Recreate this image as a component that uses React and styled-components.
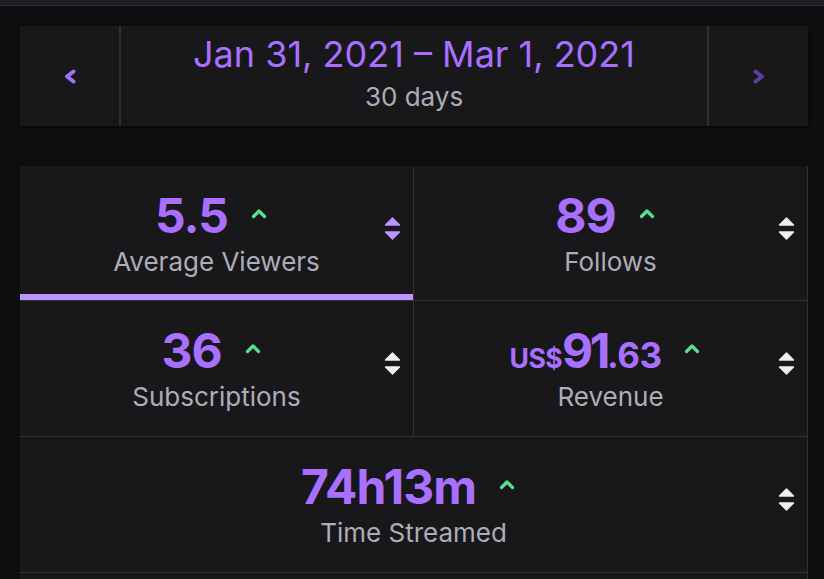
import React from "react";
import styled, { createGlobalStyle } from "styled-components";

const Global = createGlobalStyle`
  html, body { margin: 0; padding: 0; background: #0e0e10; }
  body { font-family: Inter, "Noto Sans", sans-serif; -webkit-font-smoothing: antialiased; }
`;

const TopBar = styled.div`
  height: 5px;
  background: #1f1f23;
  border-bottom: 1px solid #2a2a2f;
`;

const Main = styled.main`
  display: flex;
  flex-direction: column;
  gap: 40px;
  padding: 20px 16px 0 20px;
`;

const DateCard = styled.div`
  display: grid;
  grid-template-columns: 101px 1fr 101px;
  height: 100px;
  background: #18181b;
  box-shadow: 0 1px 3px rgba(0, 0, 0, 0.6);
`;

const NavButton = styled.button`
  appearance: none;
  background: transparent;
  border: none;
  ${(p) => (p.$side === "left" ? "border-right" : "border-left")}: 2px solid #2e2e33;
  color: ${(p) => (p.$disabled ? "#5a3fa0" : "#a070f5")};
  display: flex;
  align-items: center;
  justify-content: center;
  padding: 0;
  cursor: pointer;
`;

const DateCenter = styled.div`
  display: flex;
  flex-direction: column;
  align-items: center;
  justify-content: center;
  padding-bottom: 6px;
`;

const DateRange = styled.div`
  font-size: 36px;
  line-height: 40px;
  color: #a970ff;
  white-space: nowrap;
`;

const DaysLabel = styled.div`
  font-size: 26px;
  line-height: 30px;
  color: #adadb8;
  margin-top: 8px;
`;

const StatsGrid = styled.div`
  display: grid;
  grid-template-columns: 1fr 1fr;
`;

const StatCell = styled.div`
  display: grid;
  grid-template-columns: 40px 1fr 40px;
  align-items: center;
  padding: 0 12px;
  height: ${(p) => p.$h}px;
  box-sizing: border-box;
  background: #18181b;
  border-right: 1px solid #303035;
  border-bottom: 1px solid #303035;
  grid-column: ${(p) => (p.$wide ? "1 / span 2" : "auto")};
  box-shadow: ${(p) => (p.$active ? "inset 0 -6px 0 #bf94ff" : "none")};
`;

const StatBody = styled.div`
  grid-column: 2;
  display: flex;
  flex-direction: column;
  align-items: center;
`;

const ValueRow = styled.div`
  display: flex;
  align-items: flex-start;
`;

const Value = styled.div`
  font-size: 48px;
  line-height: 48px;
  font-weight: 700;
  color: #a970ff;
  letter-spacing: -1px;
  white-space: nowrap;
`;

const Part = styled.span`
  font-size: ${(p) => p.$size}px;
  line-height: 1;
  letter-spacing: ${(p) => p.$ls}px;
`;

const Caret = styled.svg`
  width: 16px;
  height: 11px;
  margin: 16px 11px 0 23px;
  color: #57e08f;
  flex: none;
`;

const Label = styled.div`
  font-size: 26px;
  line-height: 26px;
  color: #adadb8;
  margin-top: 9px;
  white-space: nowrap;
`;

const SortIcon = styled.svg`
  grid-column: 3;
  justify-self: end;
  width: 17px;
  height: 23px;
  margin-bottom: 10px;
  color: ${(p) => (p.$active ? "#bf94ff" : "#efeff1")};
`;

const ChevronLeft = () => (
  <svg width="12" height="15" viewBox="0 0 12 15">
    <path d="M9.5 2.5 L3 7.5 L9.5 12.5" fill="none" stroke="currentColor" strokeWidth="4" strokeLinecap="round" strokeLinejoin="round" />
  </svg>
);

const ChevronRight = () => (
  <svg width="12" height="15" viewBox="0 0 12 15">
    <path d="M2.5 2.5 L9 7.5 L2.5 12.5" fill="none" stroke="currentColor" strokeWidth="4" strokeLinecap="round" strokeLinejoin="round" />
  </svg>
);

const UpCaret = () => (
  <Caret viewBox="0 0 16 11">
    <path d="M2.5 8.5 L8 3 L13.5 8.5" fill="none" stroke="currentColor" strokeWidth="3.2" strokeLinecap="round" strokeLinejoin="round" />
  </Caret>
);

const Sort = ({ active }) => (
  <SortIcon $active={active} viewBox="0 0 17 23">
    <path d="M1.5 8 L8.5 1 L15.5 8 Z" fill="currentColor" stroke="currentColor" strokeWidth="1.4" strokeLinejoin="round" />
    <path d="M1.5 15 L8.5 22 L15.5 15 Z" fill="currentColor" stroke="currentColor" strokeWidth="1.4" strokeLinejoin="round" />
  </SortIcon>
);

const stats = [
  { key: "viewers", value: "5.5", label: "Average Viewers", active: true, h: 135 },
  { key: "follows", value: "89", label: "Follows", h: 135 },
  { key: "subs", value: "36", label: "Subscriptions", h: 136 },
  {
    key: "revenue",
    parts: [
      { t: "US$", s: 26.5, ls: -0.5 },
      { t: "91", s: 48, ls: -3.5 },
      { t: ".63", s: 35, ls: -0.5 },
    ],
    label: "Revenue",
    h: 136,
  },
  { key: "time", value: "74h13m", label: "Time Streamed", wide: true, h: 136 },
];

export default function App() {
  return (
    <>
      <Global />
      <TopBar />
      <Main>
        <DateCard>
          <NavButton $side="left" aria-label="Previous">
            <ChevronLeft />
          </NavButton>
          <DateCenter>
            <DateRange>Jan 31, 2021 – Mar 1, 2021</DateRange>
            <DaysLabel>30 days</DaysLabel>
          </DateCenter>
          <NavButton $side="right" $disabled aria-label="Next">
            <ChevronRight />
          </NavButton>
        </DateCard>
        <StatsGrid>
          {stats.map((s) => (
            <StatCell key={s.key} $active={s.active} $wide={s.wide} $h={s.h}>
              <StatBody>
                <ValueRow>
                  <Value>
                    {s.parts
                      ? s.parts.map((p) => (
                          <Part key={p.t} $size={p.s} $ls={p.ls}>
                            {p.t}
                          </Part>
                        ))
                      : s.value}
                  </Value>
                  <UpCaret />
                </ValueRow>
                <Label>{s.label}</Label>
              </StatBody>
              <Sort active={s.active} />
            </StatCell>
          ))}
          <StatCell $wide $h={40} />
        </StatsGrid>
      </Main>
    </>
  );
}
